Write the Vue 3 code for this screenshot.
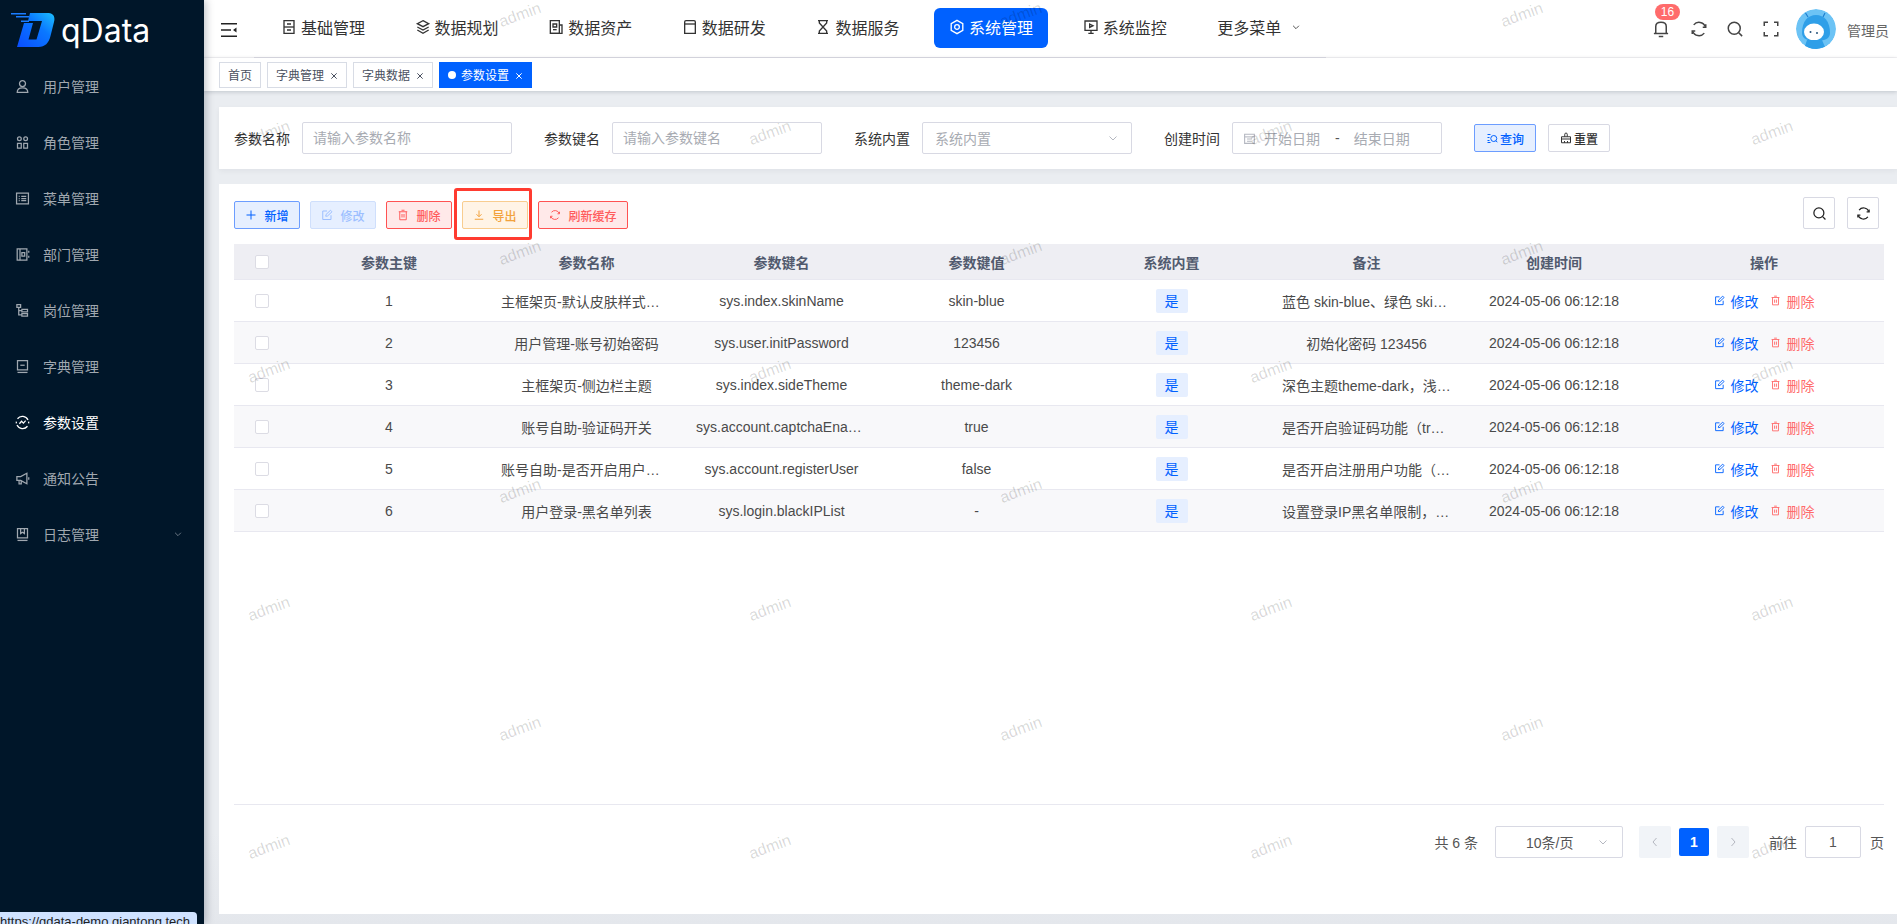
<script setup>
import { ref } from 'vue';

const icons = {
  user: ['M12 2.500a4.800 4.800 0 1 1 0 9.600 4.800 4.800 0 0 1 0-9.600z', 'M3.500 21.500c0-5 3.800-7.500 8.500-7.500s8.500 2.500 8.500 7.500z'],
  role: ['M7 3a3 3 0 1 1 0 6 3 3 0 0 1 0-6z', 'M17 3a3 3 0 1 1 0 6 3 3 0 0 1 0-6z', 'M4 13.500h6v7.500H4z', 'M14 13.500h6v7.500h-6z'],
  menu: ['M2.500 3.500h19v17h-19z', 'M6 8.500h1.500M10 8.500h8M6 12h1.500M10 12h8M6 15.500h1.500M10 15.500h8'],
  dept: ['M3.500 3h15.500v18H3.500z', 'M8 3v18', 'M11 9h4.500v5.500H11z', 'M22 6v3M22 14v3'],
  post: ['M3 2.500h6v4.500H3z', 'M6 7v12h5M6 12h5', 'M11 10h9v4h-9z', 'M11 17h9v4h-9z'],
  dict: ['M4 2.500h16v15H4z', 'M8.500 10h7', 'M4 21.500h16'],
  param: ['M20.800 8A10 10 0 0 0 4 6', 'M3.200 16A10 10 0 0 0 20 18', 'M2.200 10.500a10 10 0 0 0 0 3M21.800 10.500a10 10 0 0 1 0 3', 'M7 14l3.500-4 3 3 3.500-4'],
  notice: ['M3 9h6l10-5.500v17L9 15H3z', 'M6.500 15v5.500h3.500V15', 'M22 10v4'],
  log: ['M4 2.500h16v15H4z', 'M9 2.500v8l3-2 3 2v-8', 'M4 21.500h16'],
  base: ['M4.500 2.500h15v19h-15z', 'M4.500 12h15', 'M9 7.500h6M9 16.500h6'],
  layers: ['M12 2.500l8.500 4.500-8.500 4.500L3.500 7z', 'M3.500 12l8.500 4.500 8.500-4.500', 'M3.500 16.500l8.500 5 8.500-5'],
  asset: ['M3.500 2.500h13.500v19H3.500z', 'M17 9h4v12.500H3.500', 'M7.500 7.500h5.500v4.500H7.500z', 'M7.500 16h5.500'],
  window: ['M4 4.500c0-1 1-2 2-2h12c1 0 2 1 2 2v17H4z', 'M4 7.500h16'],
  hourglass: ['M4.500 2.500h15M4.500 21.500h15', 'M6.500 2.500v3.500L17.500 18v3.500M17.500 2.500v3.500L6.500 18v3.500'],
  hexagon: ['M12 2l8.700 5v10L12 22l-8.700-5V7z', 'M12 8.500a3.500 3.500 0 1 1 0 7 3.500 3.500 0 0 1 0-7z'],
  monitor: ['M3 3h18v14H3z', 'M12 17v4M8 21.500h8', 'M10 7.500l5 2.500-5 2.500z'],
  chevron: ['M5 9l7 7 7-7'],
  left: ['M15 4l-7 8 7 8'],
  right: ['M9 4l7 8-7 8'],
  bell: ['M5 18V8.500C5 5 8 3 12 3s7 2 7 5.500V18', 'M2.500 18h19', 'M9 22h6'],
  refresh: ['M20.500 9A9 9 0 0 0 5 6.500', 'M3.500 15A9 9 0 0 0 19 17.500', 'M21 5.500v4h-4', 'M3 18.500v-4h4'],
  search: ['M11 3a8 8 0 1 1 0 16 8 8 0 0 1 0-16z', 'M17 17l4.500 4.500'],
  full: ['M3 8V3h5M16 3h5v5M21 16v5h-5M8 21H3v-5'],
  plus: ['M12 3v18M3 12h18'],
  edit: ['M20 12.500V21H3.500V4H12', 'M9.500 14.500l.5-3.500L19 2.500l3 3-9 8.500z'],
  trash: ['M3.500 5.500h17', 'M9 2.500h6', 'M5.500 5.500v16h13v-16', 'M10 10v7M14 10v7'],
  download: ['M12 3v12', 'M7 10.500l5 5 5-5', 'M3.500 20.500h17'],
  query: ['M3 5h6M3 11h4M3 17h4M3 21h6', 'M15.500 7a6 6 0 1 1 0 12 6 6 0 0 1 0-12z', 'M20 17.500l2.500 3'],
  broom: ['M9.500 9.500V4.500c0-1.500 1-2.500 2.500-2.500s2.500 1 2.500 2.500v5', 'M3 9.500h18v12H3z', 'M3 14h18', 'M9 21.500v-3.500M15 21.500v-3.500'],
  calendar: ['M3 4h18v17H3z', 'M3 9h18', 'M7.500 13h9M7.500 17h9'],
  close: ['M4 4l16 16M20 4L4 20'],
};

const sideMenus = [
  { label: '用户管理', icon: 'user' },
  { label: '角色管理', icon: 'role' },
  { label: '菜单管理', icon: 'menu' },
  { label: '部门管理', icon: 'dept' },
  { label: '岗位管理', icon: 'post' },
  { label: '字典管理', icon: 'dict' },
  { label: '参数设置', icon: 'param', active: true },
  { label: '通知公告', icon: 'notice' },
  { label: '日志管理', icon: 'log', more: true },
];

const navMenus = [
  { label: '基础管理', icon: 'base' },
  { label: '数据规划', icon: 'layers' },
  { label: '数据资产', icon: 'asset' },
  { label: '数据研发', icon: 'window' },
  { label: '数据服务', icon: 'hourglass' },
  { label: '系统管理', icon: 'hexagon', active: true },
  { label: '系统监控', icon: 'monitor' },
];

const tags = ref([
  { label: '首页' },
  { label: '字典管理', closable: true },
  { label: '字典数据', closable: true },
  { label: '参数设置', closable: true, active: true },
]);

const actions = [
  { label: '新增', icon: 'plus', type: 'primary' },
  { label: '修改', icon: 'edit', type: 'disabled' },
  { label: '删除', icon: 'trash', type: 'danger' },
  { label: '导出', icon: 'download', type: 'warning', marked: true },
  { label: '刷新缓存', icon: 'refresh', type: 'danger', wide: true },
];

const columns = ['参数主键', '参数名称', '参数键名', '参数键值', '系统内置', '备注', '创建时间', '操作'];

const rows = [
  { id: 1, name: '主框架页-默认皮肤样式名称', key: 'sys.index.skinName', value: 'skin-blue', remark: '蓝色 skin-blue、绿色 skin-green、紫色 skin-purple、红色 skin-red', time: '2024-05-06 06:12:18' },
  { id: 2, name: '用户管理-账号初始密码', key: 'sys.user.initPassword', value: '123456', remark: '初始化密码 123456', time: '2024-05-06 06:12:18' },
  { id: 3, name: '主框架页-侧边栏主题', key: 'sys.index.sideTheme', value: 'theme-dark', remark: '深色主题theme-dark，浅色主题theme-light', time: '2024-05-06 06:12:18' },
  { id: 4, name: '账号自助-验证码开关', key: 'sys.account.captchaEnabled', value: 'true', remark: '是否开启验证码功能（true开启，false关闭）', time: '2024-05-06 06:12:18' },
  { id: 5, name: '账号自助-是否开启用户注册功能', key: 'sys.account.registerUser', value: 'false', remark: '是否开启注册用户功能（true开启，false关闭）', time: '2024-05-06 06:12:18' },
  { id: 6, name: '用户登录-黑名单列表', key: 'sys.login.blackIPList', value: '-', remark: '设置登录IP黑名单限制，多个匹配项以;分隔', time: '2024-05-06 06:12:18' },
];

// watermark tiles, centre of each word
const marks = [];
for (let c = 0; c < 7; c++) {
  const x = 269 + c * 250.5;
  const startY = c % 2 === 0 ? 133 : 15;
  for (let r = 0; r < 4; r++) {
    marks.push({ x, y: startY + r * 238 });
  }
}
</script>

<template>
  <div class="app">
    <aside class="sidebar">
      <div class="logo">
        <svg class="logo-mark" viewBox="0 0 44 34">
          <defs>
            <linearGradient id="logoBlue" x1="0" y1="1" x2="1" y2="0">
              <stop offset="0" stop-color="#0a4dff" />
              <stop offset="0.6" stop-color="#0a78ff" />
              <stop offset="1" stop-color="#1cc0ff" />
            </linearGradient>
          </defs>
          <path class="logo-lines" d="M0 0h15v1.500H0zM5 3h13v1.500H5zM10 7.500h8V9h-8z" />
          <path class="logo-body" d="M19 0h17c6 0 8.500 3 7 9l-3.500 14c-1.700 7-5.500 11-12 11H6l7-24h9l-4.500 16.500h8L31 8H17z" />
        </svg>
        <span class="logo-text">qData</span>
      </div>
      <ul class="side-menu">
        <li v-for="item in sideMenus" :key="item.label" class="side-item" :class="{ active: item.active }">
          <svg class="side-icon" viewBox="0 0 24 24"><path v-for="d in icons[item.icon]" :key="d" :d="d" /></svg>
          <span>{{ item.label }}</span>
          <svg v-if="item.more" class="side-more" viewBox="0 0 24 24"><path v-for="d in icons.chevron" :key="d" :d="d" /></svg>
        </li>
      </ul>
    </aside>

    <div class="main">
      <header class="topbar">
        <div class="hamburger">
          <svg viewBox="0 0 16 14" width="16" height="14">
            <path d="M0 .8h16M0 7h10M0 13.200h16" />
            <path class="solid" d="M15.500 4.500v5L12 7z" />
          </svg>
        </div>
        <nav class="nav">
          <a v-for="item in navMenus" :key="item.label" class="nav-item" :class="{ active: item.active }">
            <svg class="nav-icon" viewBox="0 0 24 24"><path v-for="d in icons[item.icon]" :key="d" :d="d" /></svg>
            {{ item.label }}
          </a>
          <a class="nav-item more">
            更多菜单
            <svg class="nav-more" viewBox="0 0 24 24"><path v-for="d in icons.chevron" :key="d" :d="d" /></svg>
          </a>
        </nav>
        <div class="tools">
          <span class="tool bell">
            <svg viewBox="0 0 24 24"><path v-for="d in icons.bell" :key="d" :d="d" /></svg>
            <em class="badge">16</em>
          </span>
          <span class="tool"><svg viewBox="0 0 24 24"><path v-for="d in icons.refresh" :key="d" :d="d" /></svg></span>
          <span class="tool"><svg viewBox="0 0 24 24"><path v-for="d in icons.search" :key="d" :d="d" /></svg></span>
          <span class="tool"><svg viewBox="0 0 24 24"><path v-for="d in icons.full" :key="d" :d="d" /></svg></span>
          <svg class="avatar" viewBox="0 0 40 40">
            <circle cx="20" cy="20" r="20" fill="#6cc3f5" />
            <path class="antenna" d="M12 8L9.500 4M27 8l2-4" />
            <path class="hood" d="M6 24C6 12 12 6 20 6s14 6 14 18c0 6-6 8-14 8S6 30 6 24z" />
            <ellipse cx="18" cy="23" rx="10" ry="8.500" fill="#fff" />
            <circle cx="14.500" cy="23" r="1" fill="#24527a" />
            <circle cx="21" cy="24" r="1" fill="#24527a" />
            <path class="hood" d="M8 40l3-9h15l3 7-8 2z" />
          </svg>
          <span class="username">管理员</span>
        </div>
      </header>

      <div class="tagbar">
        <span v-for="tag in tags" :key="tag.label" class="tag" :class="{ active: tag.active }">
          <i v-if="tag.active" class="tag-dot"></i>
          {{ tag.label }}
          <svg v-if="tag.closable" class="tag-close" viewBox="0 0 24 24"><path v-for="d in icons.close" :key="d" :d="d" /></svg>
        </span>
      </div>

      <div class="content">
        <section class="search-card">
          <label class="form-label">参数名称</label>
          <input class="field" placeholder="请输入参数名称" />
          <label class="form-label">参数键名</label>
          <input class="field" placeholder="请输入参数键名" />
          <label class="form-label">系统内置</label>
          <div class="field select">
            <span class="holder">系统内置</span>
            <svg viewBox="0 0 24 24"><path v-for="d in icons.chevron" :key="d" :d="d" /></svg>
          </div>
          <label class="form-label">创建时间</label>
          <div class="field date">
            <svg viewBox="0 0 24 24"><path v-for="d in icons.calendar" :key="d" :d="d" /></svg>
            <span class="holder">开始日期</span>
            <span class="dash">-</span>
            <span class="holder">结束日期</span>
          </div>
          <button class="btn primary form-btn">
            <svg viewBox="0 0 24 24"><path v-for="d in icons.query" :key="d" :d="d" /></svg>查询
          </button>
          <button class="btn plain form-btn">
            <svg viewBox="0 0 24 24"><path v-for="d in icons.broom" :key="d" :d="d" /></svg>重置
          </button>
        </section>

        <section class="table-card">
          <div class="toolbar">
            <div class="actions">
              <button
                v-for="item in actions"
                :key="item.label"
                class="btn"
                :class="[item.type, { marked: item.marked, wide: item.wide }]"
              >
                <svg viewBox="0 0 24 24"><path v-for="d in icons[item.icon]" :key="d" :d="d" /></svg>
                {{ item.label }}
              </button>
            </div>
            <div class="right-tools">
              <span class="square"><svg viewBox="0 0 24 24"><path v-for="d in icons.search" :key="d" :d="d" /></svg></span>
              <span class="square"><svg viewBox="0 0 24 24"><path v-for="d in icons.refresh" :key="d" :d="d" /></svg></span>
            </div>
          </div>

          <table class="grid">
            <colgroup>
              <col style="width: 55px" />
              <col style="width: 200px" />
              <col v-for="n in 5" :key="n" style="width: 195px" />
              <col style="width: 180px" />
              <col style="width: 240px" />
            </colgroup>
            <thead>
              <tr>
                <th><i class="check"></i></th>
                <th v-for="col in columns" :key="col">{{ col }}</th>
              </tr>
            </thead>
            <tbody>
              <tr v-for="row in rows" :key="row.id">
                <td><i class="check"></i></td>
                <td>{{ row.id }}</td>
                <td><div class="cell-text">{{ row.name }}</div></td>
                <td><div class="cell-text">{{ row.key }}</div></td>
                <td><div class="cell-text">{{ row.value }}</div></td>
                <td><span class="yes">是</span></td>
                <td><div class="cell-text remark">{{ row.remark }}</div></td>
                <td>{{ row.time }}</td>
                <td>
                  <span class="ops">
                    <a class="op edit"><svg viewBox="0 0 24 24"><path v-for="d in icons.edit" :key="d" :d="d" /></svg>修改</a>
                    <a class="op del"><svg viewBox="0 0 24 24"><path v-for="d in icons.trash" :key="d" :d="d" /></svg>删除</a>
                  </span>
                </td>
              </tr>
            </tbody>
          </table>

          <div class="pager">
            <span class="total">共 6 条</span>
            <div class="page-size">
              <span>10条/页</span>
              <svg viewBox="0 0 24 24"><path v-for="d in icons.chevron" :key="d" :d="d" /></svg>
            </div>
            <span class="page-arrow"><svg viewBox="0 0 24 24"><path v-for="d in icons.left" :key="d" :d="d" /></svg></span>
            <span class="page-num">1</span>
            <span class="page-arrow"><svg viewBox="0 0 24 24"><path v-for="d in icons.right" :key="d" :d="d" /></svg></span>
            <span class="jump">前往</span>
            <span class="page-input">1</span>
            <span class="jump-end">页</span>
          </div>
        </section>
      </div>
    </div>

    <div class="watermarks">
      <span v-for="m in marks" :key="m.x + '-' + m.y" class="mark" :style="{ left: m.x + 'px', top: m.y + 'px' }">admin</span>
    </div>
    <div class="status-url">https://qdata-demo.qiantong.tech</div>
  </div>
</template>

<style scoped>
.app {
  position: relative;
  display: flex;
  width: 100%;
  height: 100vh;
  overflow: hidden;
  font-family: "Liberation Sans", "Noto Sans CJK SC", sans-serif;
  font-size: 14px;
  color: #4a4a4a;
}
svg path {
  fill: none;
  stroke: currentColor;
  stroke-width: 2;
}

/* sidebar */
.sidebar {
  flex: 0 0 204px;
  background: #001629;
  box-shadow: 2px 0 8px rgba(0, 21, 41, 0.25);
  z-index: 2;
}
.logo {
  display: flex;
  align-items: flex-start;
  height: 58px;
  padding: 13px 0 0 11px;
  box-sizing: border-box;
}
.logo-mark {
  width: 44px;
  height: 34px;
}
.logo-mark .logo-lines {
  fill: #1a7dff;
  stroke: none;
}
.logo-mark .logo-body {
  fill: url(#logoBlue);
  stroke: none;
}
.logo-text {
  margin-left: 6px;
  font-family: Inter, sans-serif;
  font-size: 32px;
  line-height: 36px;
  color: #fff;
}
.side-menu {
  list-style: none;
  margin: 0;
  padding: 0;
}
.side-item {
  display: flex;
  align-items: center;
  height: 56px;
  padding-left: 15px;
  color: #a0a8b0;
}
.side-item.active {
  color: #fff;
}
.side-icon {
  width: 15px;
  height: 15px;
  margin-right: 13px;
}
.side-more {
  width: 10px;
  height: 10px;
  margin-left: 74px;
  color: #7d8894;
}

/* top */
.main {
  flex: 1;
  min-width: 0;
  display: flex;
  flex-direction: column;
  background: linear-gradient(#eaedf1, #eaedf1 90%, #e4e7ec);
}
.topbar {
  display: flex;
  height: 58px;
  background: #fff;
  border-bottom: 1px solid #f3f3f5;
  box-sizing: border-box;
}
.hamburger {
  display: flex;
  align-items: center;
  width: 50px;
  padding: 2px 0 0 17px;
  box-sizing: border-box;
  color: #222;
}
.hamburger path {
  stroke-width: 1.6;
}
.hamburger .solid {
  fill: #222;
  stroke: none;
}
.nav {
  display: flex;
  align-items: center;
  gap: 19.6px;
  width: 1072px;
  height: 58px;
  padding: 0 0 2px 12px;
  box-sizing: border-box;
  border-bottom: 1px solid #dcdce4;
}
.nav-item {
  display: flex;
  align-items: center;
  height: 40px;
  padding: 0 15px 2px;
  box-sizing: border-box;
  border-radius: 6px;
  font-size: 16px;
  color: #333;
  white-space: nowrap;
}
.nav-item.active {
  background: #0061ff;
  color: #fff;
}
.nav-item.more {
  padding-left: 16px;
}
.nav-icon {
  width: 16px;
  height: 16px;
  margin-right: 4px;
}
.nav-more {
  width: 10px;
  height: 10px;
  margin-left: 10px;
}
.tools {
  flex: 1;
  display: flex;
  align-items: center;
  padding-left: 325px;
}
.tool {
  position: relative;
  display: flex;
  justify-content: center;
  width: 18px;
  margin-right: 18px;
  color: #444;
}
.tool svg {
  width: 18px;
  height: 18px;
}
.bell {
  margin-left: 1px;
  margin-right: 20px;
}
.badge {
  position: absolute;
  left: 3px;
  top: -16px;
  width: 25px;
  height: 16px;
  border-radius: 8px;
  background: #ff6b6b;
  color: #fff;
  font-style: normal;
  font-size: 12px;
  line-height: 16px;
  text-align: center;
}
.avatar {
  flex: none;
  width: 40px;
  height: 40px;
  margin-left: -2px;
  border-radius: 50%;
}
.avatar .antenna {
  stroke: #1f7fd0;
  stroke-width: 1.2;
}
.avatar .hood {
  fill: #2f9fe8;
  stroke: none;
}
.username {
  margin: 3px 0 0 11px;
  font-size: 14px;
  color: #666;
  white-space: nowrap;
}

/* tags */
.tagbar {
  display: flex;
  align-items: center;
  gap: 6px;
  height: 33px;
  padding-left: 15px;
  background: #fff;
  box-shadow: 0 1px 4px rgba(0, 21, 41, 0.18);
}
.tag {
  display: flex;
  align-items: center;
  height: 26px;
  padding: 0 8px;
  border: 1px solid #d8dce5;
  box-sizing: border-box;
  font-size: 12px;
  color: #495060;
}
.tag.active {
  border-color: #0061ff;
  background: #0061ff;
  color: #fff;
}
.tag-dot {
  width: 8px;
  height: 8px;
  margin-right: 5px;
  border-radius: 50%;
  background: #fff;
}
.tag-close {
  width: 8px;
  height: 8px;
  margin: 2px 0 0 6px;
}
.tag-close path {
  stroke-width: 3;
}

/* search */
.content {
  flex: 1;
  min-height: 0;
  display: flex;
  flex-direction: column;
  gap: 15px;
  padding: 16px 0 10px 15px;
}
.search-card {
  display: flex;
  align-items: center;
  padding: 15px;
  background: #fff;
  box-shadow: 0 2px 6px rgba(0, 21, 41, 0.05);
}
.form-label {
  margin-right: 12px;
  color: #333;
  white-space: nowrap;
}
.field {
  width: 210px;
  height: 32px;
  margin-right: 32px;
  padding: 0 10px;
  box-sizing: border-box;
  border: 1px solid #d8d9e3;
  border-radius: 2px;
  background: #fff;
  font: inherit;
  outline: none;
}
.field::placeholder,
.holder {
  color: #a8abb2;
}
.select {
  display: flex;
  align-items: center;
  justify-content: space-between;
  padding-left: 12px;
}
.select svg {
  width: 12px;
  height: 12px;
  margin-right: 2px;
  color: #b4b7c0;
}
.date {
  display: flex;
  align-items: center;
}
.date svg {
  width: 13px;
  height: 13px;
  margin-right: 8px;
  color: #b4b7c0;
}
.dash {
  margin: 0 14px 0 15px;
  color: #555;
}
.btn {
  display: inline-flex;
  align-items: center;
  justify-content: center;
  width: 66px;
  height: 28px;
  padding: 0;
  box-sizing: border-box;
  border: 1px solid;
  border-radius: 2px;
  font-family: inherit;
  font-size: 12px;
  font-weight: 500;
  white-space: nowrap;
}
.btn svg {
  width: 12px;
  height: 12px;
  margin-right: 7px;
}
.btn.wide {
  width: 90px;
}
.form-btn {
  width: 62px;
  margin-right: 12px;
}
.form-btn svg {
  margin-right: 2px;
}
.primary {
  background: #e6efff;
  border-color: #6c9dff;
  color: #0061ff;
}
.disabled {
  background: #e6efff;
  border-color: #cfdffc;
  color: #9dbfff;
}
.danger {
  background: #ffe9e9;
  border-color: #ff5252;
  color: #ff5c5c;
}
.warning {
  background: #fff4e6;
  border-color: #f8cd8f;
  color: #f2a23c;
}
.plain {
  background: #fff;
  border-color: #d8d9e3;
  color: #333;
}
.marked {
  position: relative;
}
.marked::after {
  content: "";
  position: absolute;
  left: -9px;
  right: -5px;
  top: -14px;
  bottom: -12px;
  border: 3px solid #ff3b30;
  border-radius: 3px;
}

/* table */
.table-card {
  flex: 1;
  min-height: 0;
  display: flex;
  flex-direction: column;
  padding: 13px 13px 0 15px;
  background: #fff;
}
.toolbar {
  display: flex;
  align-items: flex-end;
  justify-content: space-between;
  height: 32px;
  margin-bottom: 15px;
}
.actions {
  display: flex;
  gap: 10px;
}
.right-tools {
  display: flex;
  gap: 12px;
  margin-right: 5px;
}
.square {
  display: flex;
  align-items: center;
  justify-content: center;
  width: 32px;
  height: 32px;
  box-sizing: border-box;
  border: 1px solid #d8d9e3;
  border-radius: 2px;
  color: #222;
}
.square svg {
  width: 15px;
  height: 15px;
}
.grid {
  width: 1650px;
  table-layout: fixed;
  border-collapse: collapse;
}
.grid th {
  height: 35px;
  padding: 0;
  background: #eeeef3;
  font-weight: 600;
  color: #515a6e;
  border-bottom: 1px solid #e8e8f0;
}
.grid td {
  height: 42px;
  padding: 0 12px;
  box-sizing: border-box;
  border-bottom: 1px solid #e8e8f0;
  text-align: center;
  color: #4a4a4a;
}
.grid tbody tr:nth-child(even) td {
  background: #f8f8fa;
}
.grid td:first-child {
  padding: 0;
}
.check {
  display: block;
  width: 14px;
  height: 14px;
  margin: 0 auto;
  box-sizing: border-box;
  border: 1px solid #dcdce4;
  border-radius: 2px;
  background: #fff;
}
.cell-text {
  overflow: hidden;
  white-space: nowrap;
  text-overflow: ellipsis;
}
.cell-text.remark {
  padding: 0 1px;
}
.yes {
  display: inline-block;
  width: 32px;
  height: 24px;
  border-radius: 2px;
  background: #e6efff;
  color: #0061ff;
  line-height: 24px;
}
.ops {
  display: inline-flex;
  gap: 11px;
  white-space: nowrap;
}
.op {
  display: inline-flex;
  align-items: center;
}
.op svg {
  width: 11px;
  height: 11px;
  margin-right: 6px;
}
.op.edit {
  color: #0061ff;
}
.op.del {
  color: #ff6b6b;
}

/* pager */
.pager {
  display: flex;
  align-items: center;
  justify-content: flex-end;
  height: 110px;
  margin-top: auto;
  padding-bottom: 36px;
  box-sizing: border-box;
  border-top: 1px solid #e8e8f0;
  color: #555;
}
.page-size {
  display: flex;
  align-items: center;
  width: 128px;
  height: 32px;
  margin: 0 16px 0 17px;
  padding: 0 13px 0 30px;
  box-sizing: border-box;
  border: 1px solid #d8d9e3;
  border-radius: 2px;
  justify-content: space-between;
}
.page-size svg {
  width: 12px;
  height: 12px;
  color: #b4b7c0;
}
.page-arrow {
  display: flex;
  align-items: center;
  justify-content: center;
  width: 32px;
  height: 32px;
  border-radius: 2px;
  background: #f1f4f8;
  color: #b4b7c0;
}
.page-arrow svg {
  width: 12px;
  height: 12px;
}
.page-num {
  width: 30px;
  height: 28px;
  margin: 0 8px;
  border-radius: 2px;
  background: #0061ff;
  color: #fff;
  font-weight: 700;
  line-height: 28px;
  text-align: center;
}
.jump {
  margin: 0 8px 0 20px;
}
.page-input {
  width: 56px;
  height: 32px;
  box-sizing: border-box;
  border: 1px solid #d8d9e3;
  border-radius: 2px;
  line-height: 30px;
  text-align: center;
}
.jump-end {
  margin-left: 9px;
}

/* overlays */
.watermarks {
  position: absolute;
  inset: 0;
  pointer-events: none;
  z-index: 3;
}
.mark {
  position: absolute;
  transform: translate(-50%, -50%) rotate(-20deg);
  font-size: 16px;
  color: rgba(0, 0, 0, 0.16);
}
.status-url {
  position: absolute;
  left: 0;
  top: 912px;
  z-index: 4;
  width: 197px;
  height: 20px;
  border-top-right-radius: 4px;
  background: #cfe2ff;
  font-size: 13px;
  line-height: 20px;
  color: #222;
  white-space: nowrap;
}
</style>

<style>
html,
body {
  margin: 0;
  overflow: hidden;
}
</style>
